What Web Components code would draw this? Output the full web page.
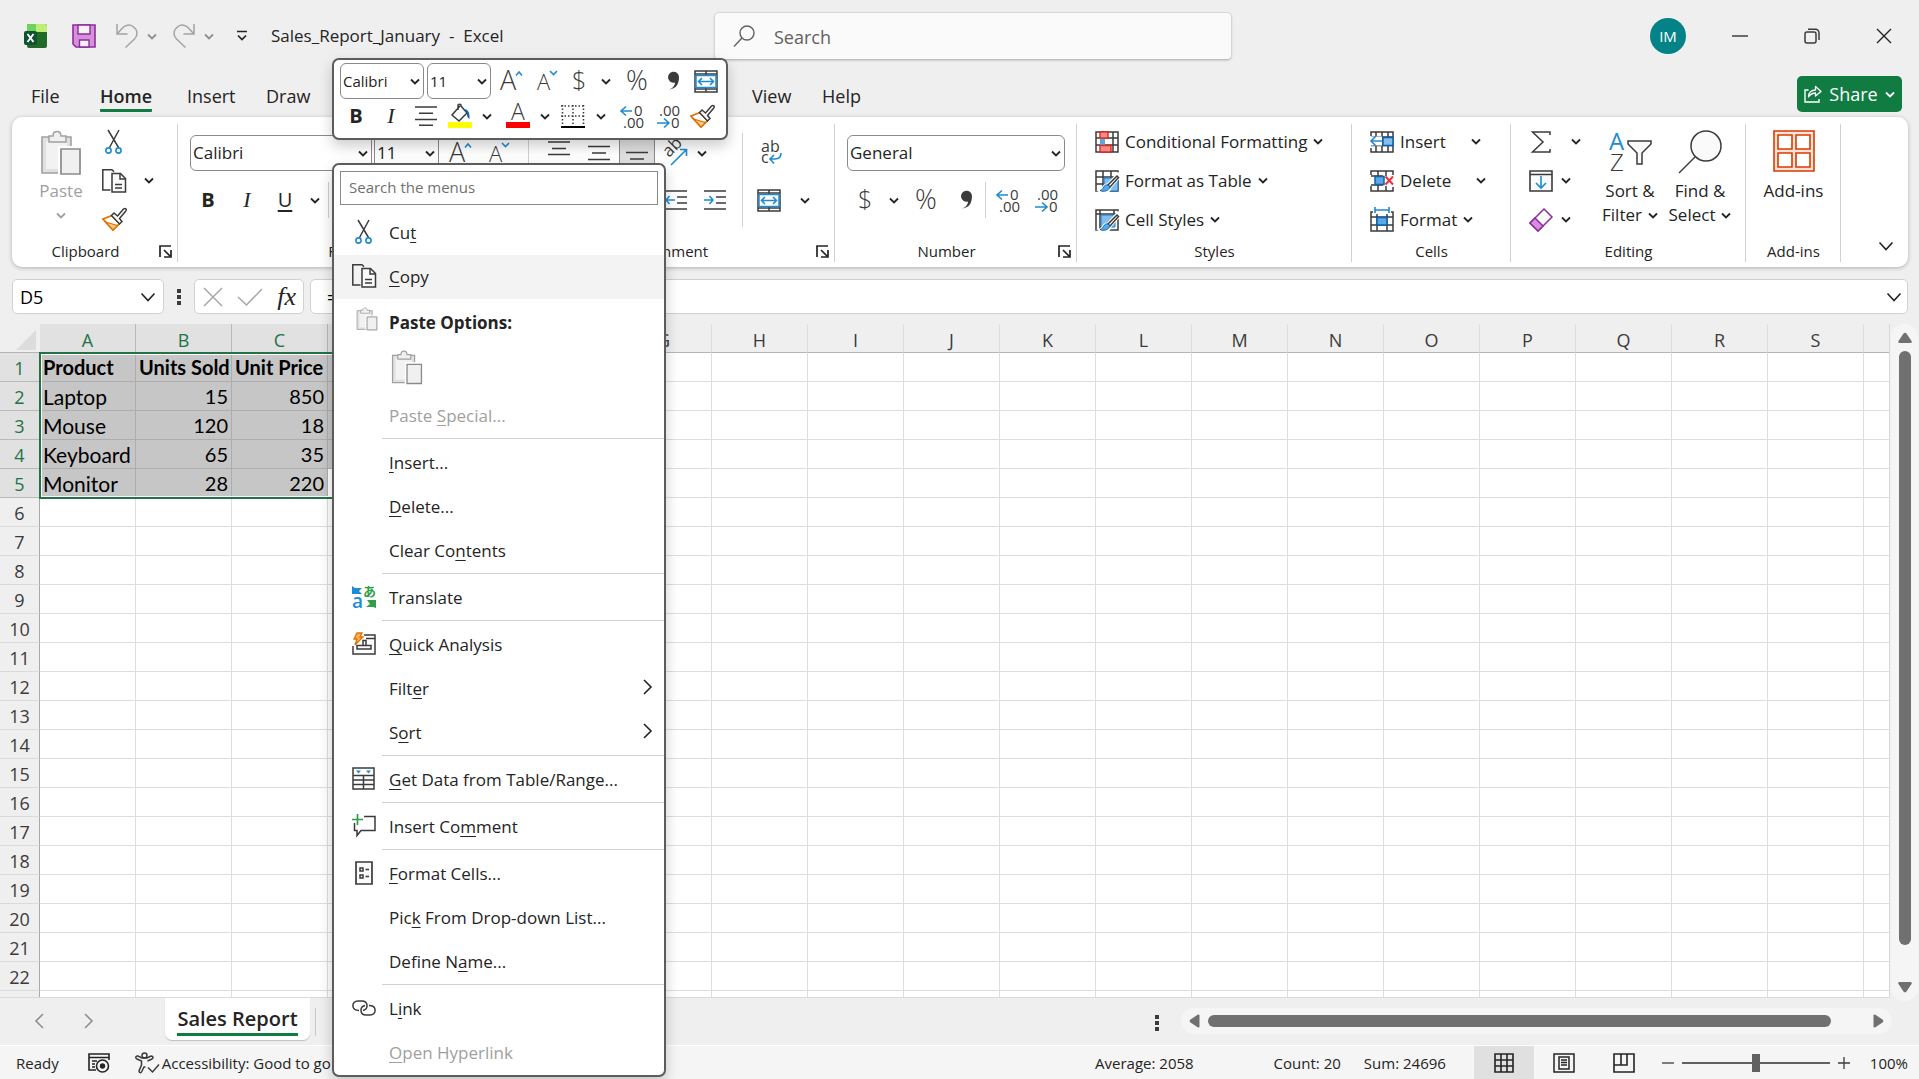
<!DOCTYPE html>
<html lang="en">
<head>
<meta charset="utf-8">
<title>Sales_Report_January - Excel</title>
<style>
    html, body {
        height: 100%;
        margin: 0;
    }
    body {
        overflow: hidden;
        background: #efefef;
        color: #242424;
        font: 17px/24px "Open Sans", "Noto Sans", sans-serif;
    }
</style>
</head>
<body>
<excel-app></excel-app>

<script>
(function () {
    const ink = 'fill="none" stroke="#3b3b3b" stroke-width="1.5"';
    const blue = 'fill="none" stroke="#1e8bd2" stroke-width="1.6"';

    // name: [width, height, markup]
    const ICONS = {
        excel: [24, 24, `<rect x="3" width="20" height="24" rx="2" fill="#1f6b25"/><path d="M5 0h8v8H3V2a2 2 0 0 1 2-2z" fill="#6fd35d"/><path d="M12 0h9a2 2 0 0 1 2 2v6H12z" fill="#bfee78"/><rect y="7" width="13" height="14" rx="2" fill="#0f5132"/><path d="M3.500 10l6 8M9.500 10l-6 8" stroke="#fff" stroke-width="1.900"/>`],
        save: [24, 24, `<path d="M1 1h22v22H4l-3-3z" fill="#d68fdb" stroke="#8f2b9c" stroke-width="1.600"/><path d="M6 1h12v9H6z" fill="#f7f2f8" stroke="#8f2b9c" stroke-width="1.400"/><path d="M7.500 23v-7h9.500v7z" fill="#f7f2f8" stroke="#8f2b9c" stroke-width="1.400"/>`],
        undo: [22, 24, `<path d="M1 0v10h10.500M1.500 9.500L6 4.500C9 1 13.500 0 17 2.500c5 3.500 5 9 1.500 12.500L9.500 23.500" fill="none" stroke="#a3a3a3" stroke-width="1.500"/>`],
        redo: [22, 24, `<path d="M21 0v10H10.500M20.500 9.500L16 4.500C13 1 8.500 0 5 2.500 0 6 0 11.500 3.500 15l9 8.500" fill="none" stroke="#a3a3a3" stroke-width="1.500"/>`],
        customize: [12, 12, `<path d="M1 1.500h10M2 5.500l4 4 4-4" fill="none" stroke="#242424" stroke-width="1.700"/>`],
        search: [22, 22, `<circle cx="14" cy="8" r="7" fill="none" stroke="#616161" stroke-width="1.400"/><path d="M9 13l-8 8.500" stroke="#616161" stroke-width="1.400"/>`],
        minimize: [16, 16, `<path d="M0 8h16" stroke="#242424" stroke-width="1.300"/>`],
        restore: [16, 16, `<rect x="1" y="4" width="11" height="11" rx="2" ${ink}/><path d="M4 1.200h7.500a3.500 3.500 0 0 1 3.500 3.500V12" ${ink}/>`],
        close: [16, 16, `<path d="M1 1l14 14M15 1L1 15" stroke="#242424" stroke-width="1.400"/>`],
        share: [18, 18, `<path d="M4.500 5H1v12h14v-3" fill="none" stroke="#fff" stroke-width="1.400"/><path d="M4.500 12c0-5 3-7 7-7V1.500l5.500 5L11.500 11V8c-3 0-5 1-7 4z" fill="none" stroke="#fff" stroke-width="1.300" stroke-linejoin="round"/>`],
        chev: [10, 7, `<path d="M1 1.500l4 4 4-4" fill="none" stroke="currentColor" stroke-width="1.800"/>`],
        chevBig: [16, 10, `<path d="M1.500 1.500l6.500 7 6.500-7" fill="none" stroke="currentColor" stroke-width="1.600"/>`],
        right: [9, 16, `<path d="M1 1l7 7-7 7" fill="none" stroke="currentColor" stroke-width="1.600"/>`],
        left: [9, 16, `<path d="M8 1L1 8l7 7" fill="none" stroke="currentColor" stroke-width="1.600"/>`],
        dots: [4, 16, `<path d="M0 0h4v4H0zM0 6h4v4H0zM0 12h4v4H0z" fill="#3b3b3b"/>`],
        cancel: [18, 18, `<path d="M0 0l18 18M18 0L0 18" stroke="#a6a6a6" stroke-width="1.500"/>`],
        enter: [24, 18, `<path d="M0 9l8.500 8L24 1" fill="none" stroke="#a6a6a6" stroke-width="1.500"/>`],
        paste: [42, 46, `<path d="M2 7h29v36H2z" fill="#e0e0e0" stroke="#a0a0a0" stroke-width="1.600"/><path d="M6 11h21v28H6z" fill="#f2f2f2"/><path d="M9 12V6h4c0-6 8-6 8 0h5v6z" fill="#f0f0f0" stroke="#a0a0a0" stroke-width="1.500"/><path d="M18 16h24v30H18z" fill="#fff"/><path d="M21 19h19v25H21z" fill="#f0f0f0" stroke="#8a8a8a" stroke-width="1.700"/>`],
        cut: [18, 24, `<path d="M3 0l10.500 17.500M14 0L4.500 17.500" ${ink}/><circle cx="3.500" cy="20.500" r="2.600" ${blue}/><circle cx="13.500" cy="20.500" r="2.600" ${blue}/>`],
        copy: [24, 24, `<path d="M8.500 21H.800V.800H10l2 2" ${ink}/><path d="M10 4.500h8.500l5 5V23H10z" fill="#fafafa" stroke="#3b3b3b" stroke-width="1.500"/><path d="M18 5v5h5M13 15.500h7M13 19h7" ${ink}/>`],
        brush: [24, 23, `<path d="M1 11l9-3.500 7.500 8L11 22z" fill="#fff" stroke="#e07000" stroke-width="1.700"/><path d="M3.500 14l12 3.500L11 22z" fill="#fbc88a" stroke="#e07000" stroke-width="1.300"/><path d="M9.500 7.500l2.500-2.500 3.500 3 6-7c2-1.500 3.500.500 2.300 2L17.500 10.500l2.500 3-2.500 2.500z" fill="#fafafa" stroke="#3b3b3b" stroke-width="1.500"/>`],
        launcher: [13, 13, `<path d="M1 12V1h11M5 5l6 6M12 5v7H5" fill="none" stroke="#242424" stroke-width="1.700"/>`],
        grow: [23, 24, `<text x="0" y="21" font-size="27" fill="#3b3b3b" font-family="Open Sans" font-weight="300">A</text><path d="M16 6.500l3-3.500 3 3.500" ${blue}/>`],
        shrink: [21, 24, `<text x="0" y="21" font-size="22" fill="#3b3b3b" font-family="Open Sans" font-weight="300">A</text><path d="M13 2l3.500 3.500L20 2" ${blue}/>`],
        dollar: [14, 28, `<text x="0" y="22" font-size="25" fill="#3b3b3b" font-family="Open Sans" font-weight="300">$</text>`],
        percent: [24, 26, `<text x="1" y="22" font-size="27" fill="#3b3b3b" font-family="Open Sans" font-weight="300">%</text>`],
        comma: [13, 20, `<path d="M2 18.500c3.500-1 6-4 6-7A5.500 5.500 0 1 1 12 6c0 7-3 12-10 12.500z" fill="#3b3b3b"/>`],
        merge: [24, 23, `<path d="M1 1h22v21H1zM12 1v5M12 17v5M1 4h22M1 19h22" ${ink}/><path d="M2 5.500h20v12H2z" fill="#fff" stroke="#1e8bd2" stroke-width="1.500"/><path d="M5 11.500h14M8 8l-3.500 3.500L8 15M16 8l3.500 3.500L16 15" ${blue}/>`],
        alignC: [22, 20, `<path d="M0 1h22M4 7.300h14M0 13.600h22M4 19.200h14" ${ink}/>`],
        alignL: [22, 20, `<path d="M0 1h22M0 7.300h14M0 13.600h22M0 19.200h14" ${ink}/>`],
        alignR: [22, 20, `<path d="M0 1h22M8 7.300h14M0 13.600h22M8 19.200h14" ${ink}/>`],
        vTop: [22, 24, `<path d="M0 1h22M4 7.500h14M0 13.500h22" ${ink}/>`],
        vMid: [22, 24, `<path d="M0 5.500h22M4 12h14M0 18.500h22" ${ink}/>`],
        vBot: [22, 24, `<path d="M0 11.500h22M4 18h14M0 24h22" ${ink}/>`],
        fill: [24, 24, `<path d="M12 2l-8 9 7 6 8-8-6-7V1a2 2 0 0 0-3 0v5" ${ink}/><path d="M15 5c5 0 7 3 6.500 10-2-1-3-4-2.500-6z" fill="#1767a8"/><path d="M0 18h24v6H0z" fill="#ff0"/>`],
        fontColor: [24, 24, `<text x="5" y="16" font-size="23" fill="#3b3b3b" font-family="Open Sans" font-weight="300">A</text><path d="M0 18h24v6H0z" fill="#f00"/>`],
        borders: [24, 23, `<path d="M1.500 0v20M12 0v20M22.500 0v20M0 1h24M0 11h24" fill="none" stroke="#3b3b3b" stroke-width="1.500" stroke-dasharray="1.500 2"/><path d="M0 22h24" stroke="#000" stroke-width="2"/>`],
        decInc: [23, 25, `<g font-size="15" fill="#3b3b3b" font-family="Open Sans"><text x="14" y="12">0</text><text x="3" y="24">.00</text></g><path d="M1 7h11M6 2.500L1 7l5 4.500" ${blue}/>`],
        decDec: [23, 25, `<g font-size="15" fill="#3b3b3b" font-family="Open Sans"><text x="2" y="12">.00</text><text x="14" y="24">0</text></g><path d="M0 19h12M7 14.500l5 4.500-5 4.500" ${blue}/>`],
        orient: [26, 26, `<text x="0" y="0" transform="translate(7 18) rotate(-45)" font-size="17" fill="#3b3b3b" font-family="Open Sans">ab</text><path d="M9 25L24 10M18 9.500h6.500V16" ${blue}/>`],
        indentOut: [22, 20, `<path d="M0 1h22M12 7h10M12 13h10M0 19h22" ${ink}/><path d="M1 10h9M4.500 6L1 10l3.500 4" ${blue}/>`],
        indentIn: [22, 20, `<path d="M0 1h22M12 7h10M12 13h10M0 19h22" ${ink}/><path d="M0 10h9M5.500 6L9 10l-3.500 4" ${blue}/>`],
        wrap: [22, 26, `<g font-size="16" fill="#3b3b3b" font-family="Open Sans"><text x="1" y="12">ab</text><text x="1" y="23">c</text></g><path d="M21 13c0 4-2 6-6 6h-5M14 15l-4 4 4 4.500" ${blue}/>`],
        condFmt: [24, 22, `<path d="M1 1h22v20H1zM6 1v20M18 1v20M1 7h22M1 14h22" ${ink}/><path d="M5 7h5v7H5z" fill="#5aa9e6"/><path d="M5 1h8v6H5zM5 14.500h11V21H5z" fill="#ff8b8b" stroke="#e0281c" stroke-width="1.400"/>`],
        fmtTable: [24, 22, `<path d="M1 21V1h22v20zM8 1v20M16 1v20M1 7h22M1 14h22" ${ink}/><path d="M9 8h14v13H9z" fill="#83beec" stroke="#1e78c8"/><path d="M23 4L13 15c-5-1-4 5-8 6 5 3 10 0 10-4L25 6z" fill="#fff" stroke="#fff" stroke-width="3"/><path d="M22 6L13 15l2 2 8.500-9.500z" ${ink}/><path d="M13 15c-5-1-4 5-8 5.500 4 2 9 0 10-3.500z" fill="#5aa9e6" stroke="#0f62ac"/>`],
        cellStyle: [24, 22, `<path d="M1 21V1h22v20zM5 1v20M19 1v5M1 5h22" ${ink}/><path d="M6 6h14v12H6z" fill="#83beec" stroke="#1e78c8"/><path d="M23 4L13 15c-5-1-4 5-8 6 5 3 10 0 10-4L25 6z" fill="#fff" stroke="#fff" stroke-width="3"/><path d="M22 6L13 15l2 2 8.500-9.500z" ${ink}/><path d="M13 15c-5-1-4 5-8 5.500 4 2 9 0 10-3.500z" fill="#5aa9e6" stroke="#0f62ac"/>`],
        cellIns: [24, 22, `<path d="M1 5V1h22v20H1v-4M1 14.500h22M12 1v20M6 1v4M18 1v20M6 15v6M1 6h22" ${ink}/><path d="M13 6.500h10v8H13z" fill="#83beec" stroke="#0f62ac" stroke-width="1.500"/><path d="M0 5.500h12v9H0z" fill="#fff"/><path d="M1 10h11M6 5l-5 5 5 5" ${blue}/>`],
        cellDel: [24, 22, `<path d="M1 5V1h22v4M1 16v5h22v-4M8 1v20M16 1v5M16 16v5M1 6h12M1 15h12" ${ink}/><path d="M5 6.500h9v8H5z" fill="#5aa9e6" stroke="#0f62ac" stroke-width="1.500"/><path d="M15.500 6.500l7.500 8M23 6.500l-7.500 8" stroke="#e8343c" stroke-width="2"/>`],
        cellFmt: [24, 25, `<path d="M3 5H1v19h22V5h-2M7 7v17M17 7v17M1 10h22M1 18h22" ${ink}/><path d="M7 10.500h10v7.500H7z" fill="#5aa9e6" stroke="#0f62ac" stroke-width="1.500"/><path d="M5 0v6M19 0v6M5 3h14" ${blue}/>`],
        sum: [20, 22, `<path d="M19 4V1H1.500L12 11 1.500 21H19v-3" ${ink}/>`],
        fillDown: [24, 22, `<path d="M1 1h22v20H1zM1 4.500h22" fill="#fafafa" stroke="#3b3b3b" stroke-width="1.600"/><path d="M12 6v12M7 13l5 5 5-5" ${blue}/>`],
        eraser: [24, 24, `<path d="M15 1l8 8L9 23l-8-8z" fill="#fafafa" stroke="#8f2b9c" stroke-width="1.500"/><path d="M6 10l8 8-5 5-8-8z" fill="#d68fdb" stroke="#8f2b9c" stroke-width="1.500"/>`],
        sort: [44, 44, `<g font-size="24" font-family="Open Sans"><text x="1" y="20" fill="#1e8bd2">A</text><text x="2" y="41" fill="#3b3b3b" font-weight="300">Z</text></g><path d="M20 11h23v3l-9 9v11h-5V23l-9-9z" fill="#fafafa" stroke="#3b3b3b" stroke-width="1.500"/>`],
        find: [44, 44, `<circle cx="28" cy="16" r="15" fill="#fafafa" stroke="#3b3b3b" stroke-width="1.500"/><path d="M17 27L1 43" ${ink}/>`],
        addins: [42, 42, `<g fill="#fff" stroke="#d83b01" stroke-width="1.600"><path d="M1 1h40v40H1z" fill="#fbe3d8"/><path d="M5 5h14v14H5zM23 5h14v14H23zM5 23h14v14H5zM23 23h14v14H23z"/></g>`],
        translate: [24, 24, `<text x="11" y="11" font-size="13" font-weight="700" fill="#2f9e44" font-family="Noto Sans CJK JP">あ</text><text x="0" y="23" font-size="19" font-weight="600" fill="#1e8bd2" font-family="Open Sans">a</text><path d="M0 1l3 2h7L7 6l3 3H0z" fill="#1e8bd2"/><path d="M24 23l-3-1h-7l4-3-3-4h9z" fill="#2f9e44"/>`],
        quick: [24, 23, `<path d="M12 3h11v19H1v-8M14 6.500h9" ${ink}/><path d="M5 13.500h14V17H5zM11 13V8.500h3V13" ${ink}/><path d="M5 1h5L8 5h3l-8 8 2-6H2z" fill="#ffb35c" stroke="#e07000" stroke-width="1.300"/>`],
        getData: [24, 23, `<path d="M1 1h21v21H1zM1 8.500h21M1 13h21M1 17.500h21M11.500 8.500V22" ${ink}/><path d="M4 3.500h5L6.500 6.500zM14 3.500h5l-2.500 3z" fill="#1e8bd2"/>`],
        comment: [24, 24, `<path d="M12 2.500h11v14H9l-4 5v-5H2.500V9" ${ink}/><path d="M5.500 0v11M0 5.500h11" stroke="#2f9e44" stroke-width="1.700"/>`],
        fmtCells: [18, 24, `<path d="M1 1h16v22H1z" fill="#fafafa" stroke="#3b3b3b" stroke-width="1.700"/><path d="M5 7h3v3H5zM5 14h3v3H5zM10.500 8.500H14M10.500 15.500H14" ${ink}/>`],
        link: [24, 16, `<path d="M7 10.500C-1 10.500-1 1 6 1h4c6 0 7 8 1 9.500M17 5.500c8 0 8 9.500 1 9.500h-4c-6 0-7-8-1-9.500" ${ink}/>`],
        macro: [22, 20, `<path d="M8 17H1V1h20v6M1 4.500h20M4 8h5M4 11h3M4 14h3" fill="none" stroke="#242424" stroke-width="1.600"/><circle cx="14.500" cy="13" r="6" fill="#f5f5f5" stroke="#242424" stroke-width="1.600"/><circle cx="14.500" cy="13" r="2.700" fill="#242424"/>`],
        access: [24, 22, `<circle cx="9.500" cy="3.500" r="2.500" ${ink}/><path d="M1.500 4C0 5 1 6.500 2 7l4.500 2v4L4 19c0 2 2 2 2.500 1L9 15h1.500M12.500 9L17 7c1.500-1 1.500-3-1-3l-4 2H7L3 4c-1 0-1.500 0-1.500 0M13 15.500l4.500 4.500L24 12.500" ${ink}/>`],
        viewGrid: [20, 20, `<path d="M1 1h18v18H1zM7 1v18M13 1v18M1 7h18M1 13h18" fill="none" stroke="#242424" stroke-width="1.600"/>`],
        viewPage: [22, 20, `<path d="M1 1h20v18H1zM6 4h10v12H6zM8 7h6M8 9.500h6M8 12h6" fill="none" stroke="#242424" stroke-width="1.500"/>`],
        viewBreak: [22, 20, `<path d="M1 1h20v18H1zM8 1v11M14 1v11H1" fill="none" stroke="#242424" stroke-width="1.600"/>`],
        minus: [12, 12, `<path d="M0 6h12" stroke="#3b3b3b" stroke-width="1.300"/>`],
        plus: [12, 12, `<path d="M0 6h12M6 0v12" stroke="#3b3b3b" stroke-width="1.300"/>`],
        triUp: [14, 11, `<path d="M5.500 1.500a2 2 0 0 1 3 0L13.500 9a1.200 1.200 0 0 1-1 2h-11a1.200 1.200 0 0 1-1-2z" fill="#707070"/>`],
        triDown: [14, 11, `<path d="M5.500 9.500a2 2 0 0 0 3 0L13.500 2a1.200 1.200 0 0 0-1-2h-11a1.200 1.200 0 0 0-1 2z" fill="#707070"/>`],
        triLeft: [11, 14, `<path d="M1.500 5.500a2 2 0 0 0 0 3L9 13.500a1.200 1.200 0 0 0 1.500-1v-11A1.200 1.200 0 0 0 9 .500z" fill="#707070"/>`],
        triRight: [11, 14, `<path d="M9.500 5.500a2 2 0 0 1 0 3L2 13.500a1.200 1.200 0 0 1-1.500-1v-11A1.200 1.200 0 0 1 2 .500z" fill="#707070"/>`]
    };

    // shared by every element that draws bare buttons
    const BUTTON_RESET = `
        button {
            padding: 0;
            border: 0;
            background: none;
            color: inherit;
            font: inherit;
        }
    `;

    function define(name, html, setup) {
        const tmpl = document.createElement('template');
        tmpl.innerHTML = html;
        customElements.define(name, class extends HTMLElement {
            constructor() {
                super();
                this.attachShadow({mode: 'open'}).appendChild(tmpl.content.cloneNode(true));
            }
            connectedCallback() {
                if (setup) setup(this, this.shadowRoot);
            }
        });
    }

    define('xl-icon', `
        <style>
            :host { display: inline-flex; flex: none; }
            svg { display: block; overflow: visible; }
        </style>
        <svg aria-hidden="true"></svg>
    `, (el, root) => {
        const [w, h, markup] = ICONS[el.getAttribute('name')];
        const scale = Number(el.getAttribute('scale') || 100) / 100;
        const svg = root.querySelector('svg');
        svg.setAttribute('viewBox', `0 0 ${w} ${h}`);
        svg.setAttribute('width', Math.round(w * scale));
        svg.setAttribute('height', Math.round(h * scale));
        svg.innerHTML = markup;
    });

    // icon-only button; the host sets --w for its slot width
    define('icon-button', `
        <style>
            ${BUTTON_RESET}
            :host { display: flex; flex: none; width: var(--w, 32px); height: 36px; }
            button { display: flex; flex: 1; align-items: center; justify-content: center; }
            :host([pressed]) button { background: #e0e0e0; outline: 1px solid #8a8a8a; outline-offset: -1px; }
            slot { display: block; }
        </style>
        <button type="button"><slot></slot></button>
    `, (el, root) => {
        const button = root.querySelector('button');
        const name = el.getAttribute('icon');
        if (name) {
            button.innerHTML = `<xl-icon name="${name}"></xl-icon>`;
        }
        button.setAttribute('aria-label', el.getAttribute('label'));
    });

    define('combo-box', `
        <style>
            :host { display: grid; flex: none; width: var(--w, 100px); height: 36px; align-items: center; }
            select {
                grid-area: 1 / 1;
                width: 100%;
                height: 36px;
                box-sizing: border-box;
                padding: 0 20px 0 2px;
                border: 1px solid #8a8a8a;
                border-radius: 6px;
                background: #fff;
                color: #242424;
                font: inherit;
                appearance: none;
            }
            :host([small]) select { font-size: 15px; }
            xl-icon { grid-area: 1 / 1; justify-self: end; margin-right: 4px; pointer-events: none; }
        </style>
        <select><option></option></select>
        <xl-icon name="chev"></xl-icon>
    `, (el, root) => {
        root.querySelector('option').textContent = el.getAttribute('value');
        root.querySelector('select').setAttribute('aria-label', el.getAttribute('label'));
    });

    define('title-bar', `
        <style>
            ${BUTTON_RESET}
            :host { display: flex; align-items: center; height: 72px; }
            .left { display: flex; align-items: center; width: 690px; padding-left: 24px; font-size: 17px; }
            .left button { display: flex; align-items: center; }
            .save { margin-left: 24px; }
            .undo, .redo { gap: 9px; color: #8f8f8f; }
            .undo { margin-left: 20px; }
            .redo { margin-left: 16px; }
            .custom { margin: 0 23px 0 22px; }
            .title { white-space: pre; }
            .search {
                display: flex;
                align-items: center;
                width: 518px;
                height: 48px;
                box-sizing: border-box;
                gap: 19px;
                padding-left: 18px;
                border: 1px solid #d6d6d6;
                border-bottom-color: #bdbdbd;
                border-radius: 5px;
                background: #fafafa;
                box-shadow: 0 1px 2px #0002;
            }
            input { flex: 1; border: 0; padding: 2px 0 0; background: none; font: inherit; font-size: 18px; color: #242424; }
            input::placeholder { color: #616161; opacity: 1; }
            .right { display: flex; align-items: center; margin-left: auto; }
            .avatar {
                width: 36px;
                height: 36px;
                margin-right: 18px;
                border-radius: 50%;
                background: #038387;
                color: #fff;
                font-size: 15px;
            }
            .win { display: flex; justify-content: center; width: 72px; }
            .win:last-child { margin-right: -1px; }
        </style>
        <div class="left">
            <xl-icon name="excel"></xl-icon>
            <button class="save" aria-label="Save"><xl-icon name="save"></xl-icon></button>
            <button class="undo" aria-label="Undo"><xl-icon name="undo"></xl-icon><xl-icon name="chev"></xl-icon></button>
            <button class="redo" aria-label="Redo"><xl-icon name="redo"></xl-icon><xl-icon name="chev"></xl-icon></button>
            <button class="custom" aria-label="Customize toolbar"><xl-icon name="customize"></xl-icon></button>
            <span class="title">Sales_Report_January  -  Excel</span>
        </div>
        <label class="search"><xl-icon name="search"></xl-icon><input type="text" placeholder="Search" aria-label="Search"></label>
        <div class="right">
            <button class="avatar">IM</button>
            <button class="win" aria-label="Minimize"><xl-icon name="minimize"></xl-icon></button>
            <button class="win" aria-label="Restore"><xl-icon name="restore"></xl-icon></button>
            <button class="win" aria-label="Close"><xl-icon name="close"></xl-icon></button>
        </div>
    `);

    define('ribbon-tabs', `
        <style>
            ${BUTTON_RESET}
            :host { display: flex; align-items: center; height: 45px; padding: 0 17px 0 31px; font-size: 18px; }
            nav { display: flex; }
            nav button { width: var(--w); padding-top: 7px; text-align: left; }
            span { display: inline-block; padding-bottom: 1px; border-bottom: 3px solid transparent; white-space: nowrap; }
            .on { font-weight: 600; border-color: #107c41; border-radius: 1px; }
            .share {
                display: flex;
                align-items: center;
                justify-content: center;
                width: 105px;
                height: 36px;
                gap: 7px;
                margin-left: auto;
                margin-bottom: 1px;
                border-radius: 5px;
                background: #107c41;
                color: #fff;
            }
        </style>
        <nav>
            <button style="--w: 69px"><span>File</span></button>
            <button style="--w: 87px"><span class="on">Home</span></button>
            <button style="--w: 79px"><span>Insert</span></button>
            <button style="--w: 486px"><span>Draw</span></button>
            <button style="--w: 70px"><span>View</span></button>
            <button style="--w: 60px"><span>Help</span></button>
        </nav>
        <button class="share"><xl-icon name="share"></xl-icon>Share<xl-icon name="chev"></xl-icon></button>
    `);

    define('ribbon-group', `
        <style>
            ${BUTTON_RESET}
            :host {
                display: grid;
                flex: none;
                grid-template-rows: 117px 24px;
                width: var(--w);
                box-sizing: border-box;
                position: relative;
            }
            :host::after {
                content: "";
                position: absolute;
                top: 2px;
                right: 0;
                bottom: 5px;
                border-right: 1px solid #d1d1d1;
            }
            .content { display: flex; min-width: 0; padding-left: var(--pad, 12px); }
            .foot { display: flex; align-items: center; font-size: 15px; }
            .foot span { flex: 1; text-align: center; }
            .foot button { display: none; margin-right: 6px; }
            :host([launcher]) .foot button { display: flex; }
        </style>
        <div class="content"><slot></slot></div>
        <div class="foot"><span></span><button aria-label="More settings"><xl-icon name="launcher"></xl-icon></button></div>
    `, (el, root) => {
        root.querySelector('.foot span').textContent = el.getAttribute('label');
    });

    // icon + text + chevron on one 39px line
    define('list-button', `
        <style>
            ${BUTTON_RESET}
            :host { display: flex; height: 39px; }
            button { display: flex; align-items: center; gap: 6px; white-space: nowrap; }
            .c { margin-left: var(--gap, 0); }
        </style>
        <button type="button"><slot name="icon"></slot><slot></slot><xl-icon class="c" name="chev"></xl-icon></button>
    `);

    define('big-button', `
        <style>
            ${BUTTON_RESET}
            :host { display: block; flex: none; width: var(--w, 70px); }
            button { display: flex; flex-direction: column; align-items: center; width: 100%; padding-top: 8px; line-height: 24px; white-space: nowrap; }
            :host([disabled]) { color: #a0a0a0; }
            slot[name=icon] { display: block; height: 49px; }
            .two { display: flex; align-items: center; gap: 6px; min-height: 24px; }
        </style>
        <button type="button"><slot name="icon"></slot><slot></slot><span class="two"><slot name="second"></slot><xl-icon name="chev"></xl-icon></span></button>
    `, (el, root) => {
        if (el.hasAttribute('plain')) root.querySelector('.two').remove();
        if (el.hasAttribute('disabled')) root.querySelector('.two').style.gap = 0;
    });

    define('ribbon-bar', `
        <style>
            ${BUTTON_RESET}
            :host {
                display: flex;
                height: 150px;
                box-sizing: border-box;
                margin: 0 11px 12px 12px;
                padding-top: 5px;
                border-radius: 10px;
                background: #fff;
                box-shadow: 0 1px 4px #0004;
            }
            .rows { padding-top: 13px; }
            .row { display: flex; align-items: center; height: 36px; margin-bottom: 11px; }
            icon-button { --w: 32px; }
            big-button { --w: 70px; }
            .small icon-button { height: 39px; }
            .split { display: flex; }
            .sep { width: 1px; height: 36px; background: #d1d1d1; }
            .tall { height: 94px; margin: 11px 8px 0 9px; }
            b { font-size: 20px; }
            i { font: italic 22px "Liberation Serif", serif; }
            u { font-size: 20px; text-underline-offset: 3px; }
            .end { display: flex; flex: 1; align-items: flex-end; justify-content: flex-end; padding: 0 14px 16px 0; }
            .end button { display: flex; }
        </style>
        <ribbon-group label="Clipboard" launcher style="--w: 166px; --pad: 12px">
            <big-button disabled style="--w: 74px"><xl-icon slot="icon" name="paste"></xl-icon>Paste</big-button>
            <div class="small">
                <icon-button icon="cut" label="Cut"></icon-button>
                <div class="split"><icon-button icon="copy" label="Copy"></icon-button><icon-button icon="chev" label="Copy options" style="--w: 38px"></icon-button></div>
                <icon-button icon="brush" label="Format Painter"></icon-button>
            </div>
        </ribbon-group>
        <ribbon-group label="Font" launcher style="--w: 351px">
            <div class="rows">
                <div class="row">
                    <combo-box value="Calibri" label="Font" style="--w: 182px; margin-right: 2px"></combo-box>
                    <combo-box value="11" label="Font size" style="--w: 65px"></combo-box>
                    <icon-button icon="grow" label="Increase font size" style="--w: 42px"></icon-button>
                    <icon-button icon="shrink" label="Decrease font size" style="--w: 36px"></icon-button>
                </div>
                <div class="row">
                    <icon-button label="Bold" style="--w: 36px"><b>B</b></icon-button>
                    <icon-button label="Italic" style="--w: 42px"><i>I</i></icon-button>
                    <icon-button label="Underline" style="--w: 34px"><u>U</u></icon-button>
                    <icon-button icon="chev" label="Underline options" style="--w: 26px"></icon-button>
                    <div class="sep"></div>
                    <icon-button icon="borders" label="Borders" style="--w: 60px"></icon-button>
                    <icon-button icon="fill" label="Fill color" style="--w: 60px"></icon-button>
                </div>
            </div>
        </ribbon-group>
        <ribbon-group label="Alignment" launcher style="--w: 306px; --pad: 10px">
            <div class="rows">
                <div class="row">
                    <icon-button icon="vTop" label="Top align" style="--w: 40px"></icon-button>
                    <icon-button icon="vMid" label="Middle align" style="--w: 40px"></icon-button>
                    <icon-button icon="vBot" label="Bottom align" pressed style="--w: 36px"></icon-button>
                    <icon-button icon="orient" label="Orientation" style="--w: 40px"></icon-button>
                    <icon-button icon="chev" label="Orientation options" style="--w: 14px"></icon-button>
                </div>
                <div class="row">
                    <icon-button icon="alignL" label="Align left" style="--w: 40px"></icon-button>
                    <icon-button icon="alignC" label="Center" style="--w: 40px"></icon-button>
                    <icon-button icon="alignR" label="Align right" style="--w: 36px"></icon-button>
                    <icon-button icon="indentOut" label="Decrease indent" style="--w: 42px"></icon-button>
                    <icon-button icon="indentIn" label="Increase indent" style="--w: 36px"></icon-button>
                </div>
            </div>
            <div class="sep tall"></div>
            <div class="rows">
                <div class="row"><icon-button icon="wrap" label="Wrap text" style="--w: 40px"></icon-button></div>
                <div class="row"><icon-button icon="merge" label="Merge and center" style="--w: 36px"></icon-button><icon-button icon="chev" label="Merge options" style="--w: 36px"></icon-button></div>
            </div>
        </ribbon-group>
        <ribbon-group label="Number" launcher style="--w: 242px">
            <div class="rows">
                <div class="row"><combo-box value="General" label="Number format" style="--w: 218px"></combo-box></div>
                <div class="row">
                    <icon-button icon="dollar" label="Accounting format" style="--w: 36px"></icon-button>
                    <icon-button icon="chev" label="Accounting options" style="--w: 22px"></icon-button>
                    <icon-button icon="percent" label="Percent style" style="--w: 42px"></icon-button>
                    <icon-button icon="comma" label="Comma style" style="--w: 38px"></icon-button>
                    <div class="sep"></div>
                    <icon-button icon="decInc" label="Increase decimal" style="--w: 42px"></icon-button>
                    <icon-button icon="decDec" label="Decrease decimal" style="--w: 36px"></icon-button>
                </div>
            </div>
        </ribbon-group>
        <ribbon-group label="Styles" style="--w: 275px; --pad: 18px">
            <div>
                <list-button><xl-icon slot="icon" name="condFmt"></xl-icon>Conditional Formatting</list-button>
                <list-button><xl-icon slot="icon" name="fmtTable"></xl-icon>Format as Table</list-button>
                <list-button><xl-icon slot="icon" name="cellStyle"></xl-icon>Cell Styles</list-button>
            </div>
        </ribbon-group>
        <ribbon-group label="Cells" style="--w: 159px; --pad: 18px">
            <div>
                <list-button style="--gap: 19px"><xl-icon slot="icon" name="cellIns"></xl-icon>Insert</list-button>
                <list-button style="--gap: 19px"><xl-icon slot="icon" name="cellDel"></xl-icon>Delete</list-button>
                <list-button><xl-icon slot="icon" name="cellFmt"></xl-icon>Format</list-button>
            </div>
        </ribbon-group>
        <ribbon-group label="Editing" style="--w: 235px; --pad: 14px">
            <div class="small">
                <div class="split"><icon-button icon="sum" label="AutoSum"></icon-button><icon-button icon="chev" label="AutoSum options" style="--w: 38px"></icon-button></div>
                <div class="split"><icon-button icon="fillDown" label="Fill"></icon-button><icon-button icon="chev" label="Fill options" style="--w: 18px"></icon-button></div>
                <div class="split"><icon-button icon="eraser" label="Clear"></icon-button><icon-button icon="chev" label="Clear options" style="--w: 18px"></icon-button></div>
            </div>
            <big-button><xl-icon slot="icon" name="sort"></xl-icon>Sort &amp;<span slot="second">Filter</span></big-button>
            <big-button><xl-icon slot="icon" name="find"></xl-icon>Find &amp;<span slot="second">Select</span></big-button>
        </ribbon-group>
        <ribbon-group label="Add-ins" style="--w: 95px; --pad: 0px">
            <big-button plain style="--w: 95px"><xl-icon slot="icon" name="addins"></xl-icon>Add-ins</big-button>
        </ribbon-group>
        <div class="end"><button aria-label="Ribbon display options"><xl-icon name="chevBig"></xl-icon></button></div>
    `);

    define('formula-bar', `
        <style>
            ${BUTTON_RESET}
            :host { display: flex; align-items: center; height: 35px; margin: 0 11px 10px 12px; }
            .box {
                display: flex;
                align-items: center;
                height: 35px;
                box-sizing: border-box;
                border: 1px solid #d1d1d1;
                border-radius: 5px;
                background: #fff;
            }
            input { min-width: 0; flex: 1; border: 0; padding: 0; background: none; font: inherit; font-size: 18px; color: #000; }
            .name { width: 152px; padding: 0 7px; }
            .dots { margin: 0 13px; }
            .tools { width: 110px; justify-content: space-between; box-sizing: border-box; padding: 0 7px 0 9px; margin-right: 6px; }
            .tools button { display: flex; }
            .tools i { font: italic 26px/26px "Liberation Serif", serif; }
            .formula { flex: 1; padding: 0 5px 0 16px; }
        </style>
        <div class="box name"><input type="text" value="D5" aria-label="Name box"><xl-icon name="chevBig"></xl-icon></div>
        <xl-icon class="dots" name="dots"></xl-icon>
        <div class="box tools">
            <button aria-label="Cancel"><xl-icon name="cancel"></xl-icon></button>
            <button aria-label="Enter"><xl-icon name="enter"></xl-icon></button>
            <button><i>fx</i></button>
        </div>
        <div class="box formula"><input type="text" value="=" aria-label="Formula"><xl-icon name="chevBig"></xl-icon></div>
    `);

    define('sheet-grid', `
        <style>
            :host { display: block; position: relative; flex: 1; min-width: 0; overflow: hidden; border-right: 1px solid #d9d9d9; border-bottom: 1px solid #d9d9d9; }
            table { width: 1960px; border-collapse: separate; border-spacing: 0; table-layout: fixed; background: #fff; }
            th, td { height: 29px; box-sizing: border-box; padding: 0; border-right: 1px solid #dedede; border-bottom: 1px solid #dedede; }
            th { padding-top: 2px; background: #efefef; color: #3b3b3b; font-weight: 400; font-size: 18px; line-height: 24px; }
            thead th { padding-top: 4px; border-bottom-color: #b5b5b5; }
            tbody th { border-right-color: #a8a8a8; border-bottom-color: #dadada; }
            th.on { background: #e1e1e1; color: #217346; border-bottom-color: #b9b9b9; }
            thead th.on { border-right-color: #b9b9b9; }
            .corner { border-right-color: #efefef; }
            .corner svg { display: block; margin: 0 0 0 auto; }
            td { color: #000; font: 21px/27px Lato, sans-serif; padding: 0 3px; white-space: nowrap; }
            td.sel { background: #c6c6c6; border-color: #adadad; }
            td.num { font-size: 20px; text-align: right; }
            td.head { font-weight: 700; font-size: 20px; }
            .range {
                position: absolute;
                top: 28px;
                left: 39px;
                width: 386px;
                height: 147px;
                box-sizing: border-box;
                border: 2px solid #217346;
                box-shadow: inset 0 0 0 1px #fff;
            }
        </style>
        <table>
            <colgroup></colgroup>
            <thead><tr></tr></thead>
            <tbody></tbody>
        </table>
        <div class="range"></div>
    `, (el, root) => {
        const data = [
            ['Product', 'Units Sold', 'Unit Price'],
            ['Laptop', 15, 850],
            ['Mouse', 120, 18],
            ['Keyboard', 65, 35],
            ['Monitor', 28, 220]
        ];
        // the last column is cut by the window edge, so it has no letter
        const letters = 'ABCDEFGHIJKLMNOPQRS'.split('').concat('');
        root.querySelector('colgroup').innerHTML = '<col style="width: 40px">' + letters.map(() => '<col style="width: 96px">').join('');
        root.querySelector('thead tr').innerHTML =
            '<th class="corner"><svg width="23" height="20"><path d="M20 0v20H0z" fill="#dcdcdc"/></svg></th>' +
            letters.map((l, i) => `<th class="${i < 4 ? 'on' : ''}">${l}</th>`).join('');
        let body = '';
        for (let r = 0; r < 23; r++) {
            body += `<tr><th class="${r < 5 ? 'on' : ''}">${r < 22 ? r + 1 : ''}</th>`;
            for (let c = 0; c < letters.length; c++) {
                const v = data[r] ? data[r][c] : undefined;
                const cls = [];
                if (r < 5 && c < 4 && !(r === 4 && c === 3)) cls.push('sel');
                if (typeof v === 'number') cls.push('num');
                if (r === 0) cls.push('head');
                body += `<td class="${cls.join(' ')}">${v === undefined ? '' : v}</td>`;
            }
            body += '</tr>';
        }
        root.querySelector('tbody').innerHTML = body;
    });

    define('scroll-bar', `
        <style>
            ${BUTTON_RESET}
            :host { display: flex; flex-direction: column; align-items: center; width: 27px; box-sizing: border-box; padding: 8px 0; border-radius: 13px; background: #f5f5f5; }
            :host([horizontal]) { flex-direction: row; width: auto; height: 26px; padding: 0 8px; }
            button { display: flex; }
            .track { flex: 1; display: flex; flex-direction: inherit; margin: 8px 0; }
            :host([horizontal]) .track { margin: 0 8px; }
            .thumb { flex: var(--size); min-width: 12px; min-height: 12px; border-radius: 6px; background: #707070; }
            .rest { flex: var(--rest); }
        </style>
        <button class="a" aria-label="Scroll back"></button>
        <div class="track"><div class="thumb"></div><div class="rest"></div></div>
        <button class="b" aria-label="Scroll forward"></button>
    `, (el, root) => {
        const names = el.hasAttribute('horizontal') ? ['triLeft', 'triRight'] : ['triUp', 'triDown'];
        root.querySelector('.a').innerHTML = `<xl-icon name="${names[0]}"></xl-icon>`;
        root.querySelector('.b').innerHTML = `<xl-icon name="${names[1]}"></xl-icon>`;
    });

    define('sheet-tabs', `
        <style>
            ${BUTTON_RESET}
            :host { display: flex; align-items: flex-start; height: 47px; }
            .nav { display: flex; gap: 40px; padding: 15px 0 0 35px; color: #8f8f8f; }
            .nav button { display: flex; }
            .tab { width: 145px; height: 42px; margin-left: 72px; background: #fff; border-radius: 0 0 7px 7px; box-shadow: 0 1px 1px #0003; font-size: 20px; font-weight: 600; white-space: nowrap; }
            .tab span { display: inline-block; line-height: 28px; padding-top: 3px; border-bottom: 3px solid #107c41; }
            .sep { width: 1px; height: 28px; margin: 10px 0 0 5px; background: #c8c8c8; }
            .dots { margin: 17px 22px 0 auto; }
            scroll-bar { width: 711px; margin: 10px 27px 0 0; }
        </style>
        <div class="nav">
            <button aria-label="Previous sheet"><xl-icon name="left"></xl-icon></button>
            <button aria-label="Next sheet"><xl-icon name="right"></xl-icon></button>
        </div>
        <button class="tab"><span>Sales Report</span></button>
        <div class="sep"></div>
        <xl-icon class="dots" name="dots"></xl-icon>
        <scroll-bar horizontal style="--size: 626; --rest: 34"></scroll-bar>
    `);

    define('status-bar', `
        <style>
            ${BUTTON_RESET}
            :host { display: flex; align-items: center; height: 34px; box-sizing: border-box; padding: 0 11px 0 16px; border-top: 1px solid #fff; background: #f5f5f5; font-size: 15px; white-space: nowrap; }
            button { display: flex; align-items: center; }
            .macro { margin: 0 25px 0 29px; }
            .acc { gap: 3px; }
            .stats { display: flex; margin-left: auto; }
            .stats span:first-child { margin-right: 80px; }
            .stats span:last-child { margin: 0 28px 0 23px; }
            .view { justify-content: center; width: 60px; height: 33px; }
            .view.on { background: #e0e0e0; }
            .zoom { display: flex; align-items: center; gap: 8px; margin: 0 20px 0 8px; }
            input { width: 148px; height: 18px; margin: 0; background: none; appearance: none; }
            input::-webkit-slider-runnable-track { height: 18px; background: linear-gradient(#616161, #616161) center / 100% 2px no-repeat; }
            input::-webkit-slider-thumb { width: 8px; height: 18px; background: #616161; appearance: none; }
        </style>
        <span>Ready</span>
        <button class="macro" aria-label="Record macro"><xl-icon name="macro"></xl-icon></button>
        <button class="acc"><xl-icon name="access"></xl-icon>Accessibility: Good to go</button>
        <div class="stats"><span>Average: 2058</span><span>Count: 20</span><span>Sum: 24696</span></div>
        <button class="view on" aria-label="Normal"><xl-icon name="viewGrid"></xl-icon></button>
        <button class="view" aria-label="Page Layout"><xl-icon name="viewPage"></xl-icon></button>
        <button class="view" aria-label="Page Break Preview"><xl-icon name="viewBreak"></xl-icon></button>
        <div class="zoom">
            <button aria-label="Zoom out"><xl-icon name="minus"></xl-icon></button>
            <input type="range" min="0" max="100" value="50" aria-label="Zoom">
            <button aria-label="Zoom in"><xl-icon name="plus"></xl-icon></button>
        </div>
        <span>100%</span>
    `);

    define('mini-toolbar', `
        <style>
            :host {
                display: block;
                width: 396px;
                height: 82px;
                box-sizing: border-box;
                padding: 3px 6px;
                border: 2px solid #5c5c5c;
                border-radius: 7px;
                background: #fff;
                box-shadow: 0 6px 14px #0003;
            }
            .row { display: flex; height: 35px; }
            b { font-size: 20px; }
            i { font: italic 22px "Liberation Serif", serif; }
        </style>
        <div class="row">
            <combo-box small value="Calibri" label="Font" style="--w: 84px; margin-right: 3px"></combo-box>
            <combo-box small value="11" label="Font size" style="--w: 64px"></combo-box>
            <icon-button icon="grow" label="Increase font size" style="--w: 40px"></icon-button>
            <icon-button icon="shrink" label="Decrease font size"></icon-button>
            <icon-button icon="dollar" label="Accounting format"></icon-button>
            <icon-button icon="chev" label="Accounting options" style="--w: 22px"></icon-button>
            <icon-button icon="percent" label="Percent style" style="--w: 40px"></icon-button>
            <icon-button icon="comma" label="Comma style"></icon-button>
            <icon-button icon="merge" label="Merge and center" style="--w: 34px"></icon-button>
        </div>
        <div class="row">
            <icon-button label="Bold"><b>B</b></icon-button>
            <icon-button label="Italic" style="--w: 38px"><i>I</i></icon-button>
            <icon-button icon="alignC" label="Center"></icon-button>
            <icon-button icon="fill" label="Fill color" style="--w: 36px"></icon-button>
            <icon-button icon="chev" label="Fill options" style="--w: 18px"></icon-button>
            <icon-button icon="fontColor" label="Font color" style="--w: 44px"></icon-button>
            <icon-button icon="chev" label="Font color options" style="--w: 10px"></icon-button>
            <icon-button icon="borders" label="Borders" style="--w: 46px"></icon-button>
            <icon-button icon="chev" label="Border options" style="--w: 10px"></icon-button>
            <icon-button icon="decInc" label="Increase decimal" style="--w: 50px"></icon-button>
            <icon-button icon="decDec" label="Decrease decimal" style="--w: 24px"></icon-button>
            <icon-button icon="brush" label="Format Painter" style="--w: 44px"></icon-button>
        </div>
    `);

    define('menu-item', `
        <style>
            ${BUTTON_RESET}
            :host { display: block; }
            :host([hover]) { background: #f3f3f3; }
            :host([disabled]) { color: #a0a0a0; }
            button { display: grid; grid-template-columns: 60px 1fr auto; align-items: center; width: 100%; height: 44px; padding-right: 12px; text-align: left; white-space: nowrap; }
            .icon { display: flex; justify-content: center; width: 60px; padding-bottom: 3px; }
            .text { margin-left: -5px; }
        </style>
        <button type="button"><span class="icon"></span><span class="text"><slot></slot></span><span class="more"></span></button>
    `, (el, root) => {
        const icon = el.getAttribute('icon');
        if (icon) root.querySelector('.icon').innerHTML = `<xl-icon name="${icon}"></xl-icon>`;
        if (el.hasAttribute('submenu')) root.querySelector('.more').innerHTML = '<xl-icon name="right"></xl-icon>';
    });

    define('context-menu', `
        <style>
            ${BUTTON_RESET}
            :host {
                display: block;
                width: 334px;
                box-sizing: border-box;
                padding-top: 6px;
                border: 2px solid #5c5c5c;
                border-radius: 7px;
                background: #fff;
                box-shadow: 0 6px 14px #0003;
                font-size: 17px;
            }
            input { display: block; width: 318px; height: 34px; box-sizing: border-box; margin: 0 0 6px 6px; padding: 0 8px 3px; border: 1px solid #8a8a8a; font: inherit; font-size: 15px; }
            input::placeholder { color: #707070; opacity: 1; }
            u { text-underline-offset: 3px; text-decoration-thickness: 1px; text-decoration-skip-ink: none; }
            hr { margin: 0 0 2px 48px; border: 0; border-top: 1px solid #d1d1d1; }
            .head { display: grid; grid-template-columns: 55px 1fr; align-items: center; height: 48px; font-weight: 700; }
            .head xl-icon { justify-self: end; margin: 0 11px 9px 0; }
            .paste { display: flex; align-items: flex-start; height: 47px; padding: 3px 0 0 57px; }
        </style>
        <input type="text" placeholder="Search the menus" aria-label="Search the menus">
        <menu-item icon="cut">Cu<u>t</u></menu-item>
        <menu-item icon="copy" hover><u>C</u>opy</menu-item>
        <div class="head"><xl-icon name="paste" scale="52"></xl-icon><span>Paste Options:</span></div>
        <button class="paste" aria-label="Paste"><xl-icon name="paste" scale="75"></xl-icon></button>
        <menu-item disabled>Paste <u>S</u>pecial...</menu-item>
        <hr>
        <menu-item><u>I</u>nsert...</menu-item>
        <menu-item><u>D</u>elete...</menu-item>
        <menu-item>Clear Co<u>n</u>tents</menu-item>
        <hr>
        <menu-item icon="translate">Translate</menu-item>
        <hr>
        <menu-item icon="quick"><u>Q</u>uick Analysis</menu-item>
        <menu-item submenu>Filt<u>e</u>r</menu-item>
        <menu-item submenu>S<u>o</u>rt</menu-item>
        <hr>
        <menu-item icon="getData"><u>G</u>et Data from Table/Range...</menu-item>
        <hr>
        <menu-item icon="comment">Insert Co<u>m</u>ment</menu-item>
        <hr>
        <menu-item icon="fmtCells"><u>F</u>ormat Cells...</menu-item>
        <menu-item>Pic<u>k</u> From Drop-down List...</menu-item>
        <menu-item>Define N<u>a</u>me...</menu-item>
        <hr>
        <menu-item icon="link">L<u>i</u>nk</menu-item>
        <menu-item disabled><u>O</u>pen Hyperlink</menu-item>
    `);

    define('excel-app', `
        <style>
            :host { display: flex; flex-direction: column; height: 100vh; position: relative; }
            title-bar, ribbon-tabs, ribbon-bar, formula-bar, sheet-tabs, status-bar { flex: none; }
            main { display: flex; flex: 1; min-height: 0; }
            main scroll-bar { margin: 0 1px -3px 1px; }
            mini-toolbar, context-menu { position: absolute; left: 332px; }
            mini-toolbar { top: 58px; }
            context-menu { top: 163px; }
        </style>
        <title-bar></title-bar>
        <ribbon-tabs></ribbon-tabs>
        <ribbon-bar></ribbon-bar>
        <formula-bar></formula-bar>
        <main>
            <sheet-grid></sheet-grid>
            <scroll-bar style="--size: 596; --rest: 29"></scroll-bar>
        </main>
        <sheet-tabs></sheet-tabs>
        <status-bar></status-bar>
        <mini-toolbar></mini-toolbar>
        <context-menu></context-menu>
    `);
})();
</script>
</body>
</html>
